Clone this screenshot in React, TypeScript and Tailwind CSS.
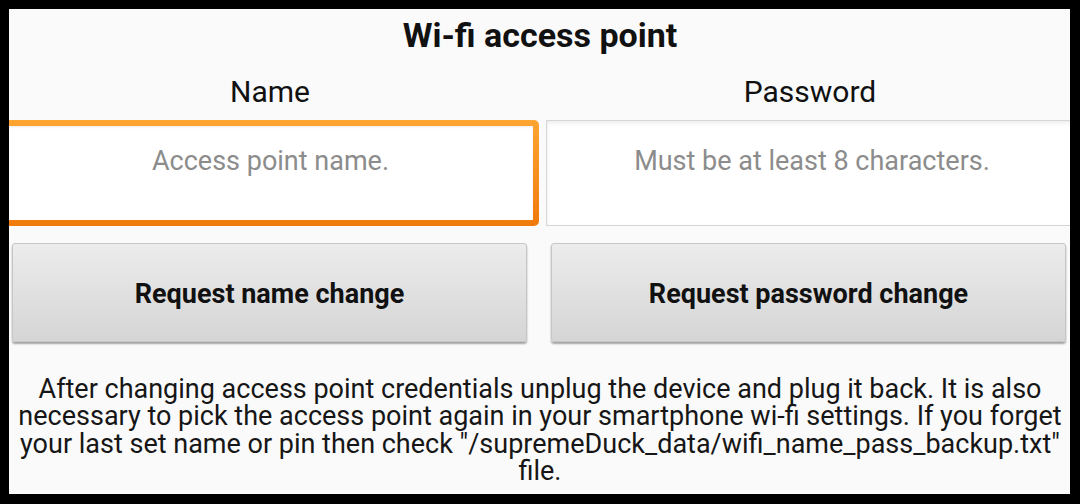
import React from "react";

export default function App() {
  return (
    <div className="relative w-[1080px] h-[504px] overflow-hidden bg-[#fafafa] text-[#111] font-['Roboto','Noto_Sans',sans-serif]">
      <div className="flex flex-col pt-[9px]">
        <div className="flex h-[52px] items-center justify-center text-[34px] font-bold leading-none">
          Wi-fi access point
        </div>
        <div className="grid h-[59px] grid-cols-2 items-center pt-[3px] text-[30px] leading-none">
          <div className="text-center">Name</div>
          <div className="text-center">Password</div>
        </div>
        <div className="grid h-[106px] grid-cols-2">
          <div className="ml-[2px] mr-[1px] rounded-[5px] bg-gradient-to-b from-[#ffa531] to-[#f07a0c] p-[6px]">
            <div className="h-full bg-white pt-[20px] text-center text-[27px] leading-[30px] text-[#8c8c8c] shadow-[inset_0_1px_3px_rgba(0,0,0,0.08)]">
              Access point name.
            </div>
          </div>
          <div className="ml-[6px] mr-[2px] border border-[#d6d6d6] bg-white pt-[25px] text-center text-[27px] leading-[30px] text-[#8c8c8c] shadow-[inset_0_2px_4px_rgba(0,0,0,0.08)]">
            Must be at least 8 characters.
          </div>
        </div>
        <div className="mt-[17px] grid h-[99px] grid-cols-2">
          <button className="ml-[12px] mr-[13px] flex items-center justify-center rounded-[3px] border border-[#c6c6c6] bg-gradient-to-b from-[#ececec] to-[#d5d5d5] pt-[3px] text-[27px] font-bold text-[#111] shadow-[0_2px_2px_rgba(0,0,0,0.35)]">
            Request name change
          </button>
          <button className="ml-[11px] mr-[14px] flex items-center justify-center rounded-[3px] border border-[#c6c6c6] bg-gradient-to-b from-[#ececec] to-[#d5d5d5] pt-[3px] text-[27px] font-bold text-[#111] shadow-[0_2px_2px_rgba(0,0,0,0.35)]">
            Request password change
          </button>
        </div>
        <p className="mt-[34px] text-center text-[27px] leading-[27.4px] text-[#161616]">
          After changing access point credentials unplug the device and plug it back. It is also
          <br />
          necessary to pick the access point again in your smartphone wi-fi settings. If you forget
          <br />
          your last set name or pin then check "/supremeDuck_data/wifi_name_pass_backup.txt"
          <br />
          file.
        </p>
      </div>
      <div className="pointer-events-none absolute inset-0 border-t-[9px] border-r-[10px] border-b-[10px] border-l-[9px] border-black" />
    </div>
  );
}
